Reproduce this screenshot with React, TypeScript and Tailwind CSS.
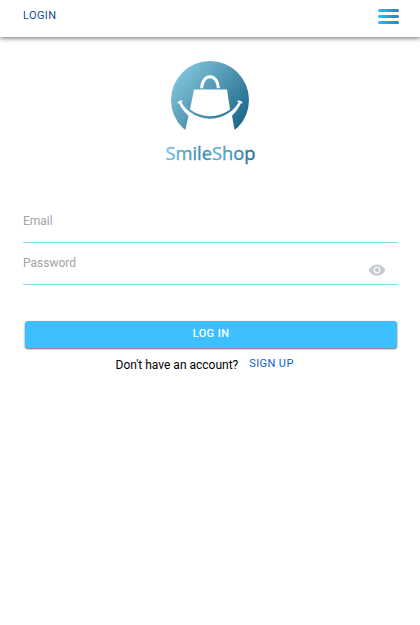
import React from "react";

function Logo() {
  return (
    <svg className="block h-[114px] w-[120px]" viewBox="150 58 120 114" role="img" aria-label="SmileShop">
      <defs>
        <linearGradient id="disc" gradientUnits="userSpaceOnUse" x1="178" y1="74" x2="242" y2="126">
          <stop offset="0" stopColor="#80c2da" />
          <stop offset="1" stopColor="#1c6787" />
        </linearGradient>
        <linearGradient id="word" gradientUnits="userSpaceOnUse" x1="166" y1="0" x2="255" y2="0">
          <stop offset="0" stopColor="#78c1d9" />
          <stop offset="0.42" stopColor="#3288a9" />
          <stop offset="0.56" stopColor="#62b0ca" />
          <stop offset="1" stopColor="#256f90" />
        </linearGradient>
      </defs>
      <circle cx="210" cy="100" r="39" fill="url(#disc)" />
      <path d="M177.300 103.300 L178.500 101.200 L182.300 100.300 L182.600 101.500 L181.300 102.300 C184 107 187 110 190 112 C202 121 218 121 230 112 C233 110 236 107 238.700 102.300 L237.400 101.500 L237.700 100.300 L241.500 101.200 L242.700 103.300 L240.700 103.600 C238.500 108.500 236 112 232 115.700 L234.700 130.300 L240 141 L180 141 L185.300 130.300 L188.500 115.700 C184 112 181.500 108.500 179.300 103.600 Z" fill="#fff" />
      <path d="M194 89.500 H227 L230 109.500 C218 118.500 202 118.500 190 109.500 Z" fill="#fff" />
      <path d="M201.700 88.300 C202 73 218 73 218.300 88.300" fill="none" stroke="#fff" strokeWidth="3" />
      <text x="165.500" y="160" textLength="90" lengthAdjust="spacingAndGlyphs" fill="url(#word)" stroke="url(#word)" strokeWidth="0.35" className="font-['Open_Sans',sans-serif] text-[18.5px]">SmileShop</text>
    </svg>
  );
}

export default function App() {
  return (
    <main className="flex h-[625px] w-full flex-col bg-white font-[Roboto,sans-serif]">
      <header className="flex h-[37px] shrink-0 items-start justify-between pr-[21px] pl-[23px] shadow-[0_1px_5px_0px_rgba(0,0,0,0.6)]">
        <a className="mt-[8px] text-[11px] leading-4 tracking-[0.4px] text-[#174691]">LOGIN</a>
        <button className="mt-[9px] flex flex-col gap-[3px]" aria-label="Menu">
          <span className="h-[3px] w-[21px] rounded-sm bg-linear-to-r from-[#2cbcf1] to-[#1687d5]" />
          <span className="h-[3px] w-[21px] rounded-sm bg-linear-to-r from-[#2cbcf1] to-[#1687d5]" />
          <span className="h-[3px] w-[21px] rounded-sm bg-linear-to-r from-[#2cbcf1] to-[#1687d5]" />
        </button>
      </header>
      <div className="mt-[21px] flex justify-center">
        <Logo />
      </div>
      <form className="mt-[29px] flex flex-col pr-[22px] pl-[23px]">
        <div className="h-[42px] border-b border-[#80deea] pt-[12px] text-[12px] leading-4 text-[#a3a3a3]">Email</div>
        <div className="flex h-[42px] items-start justify-between border-b border-[#80deea] pt-[12px] pr-[12px] text-[12px] leading-4 text-[#a3a3a3]">
          <span>Password</span>
          <svg className="mt-[6px] h-[18px] w-[18px]" viewBox="0 0 24 24">
            <path d="M12 4.500C7 4.500 2.730 7.610 1 12c1.730 4.390 6 7.500 11 7.500s9.270-3.110 11-7.500c-1.730-4.390-6-7.500-11-7.500z" fill="#c5cad3" />
            <circle cx="12" cy="12" r="3.700" fill="none" stroke="#fff" strokeWidth="1.600" />
          </svg>
        </div>
        <button type="button" className="mt-9 mr-[1px] ml-[2px] flex h-[27px] justify-center rounded-[3px] bg-[#3dc0ff] pt-[5px] text-[11px] leading-4 font-medium tracking-[0.4px] text-white shadow-[0_1px_2px_rgba(0,0,0,0.6)]">LOG IN</button>
      </form>
      <p className="mt-[8px] flex items-start pl-[115.5px] text-[12px] leading-4 text-black">
        <span className="mt-[1px]">Don't have an account?</span>
        <a className="ml-[11px] text-[11px] tracking-[0.4px] text-[#0b62d6]">SIGN UP</a>
      </p>
    </main>
  );
}
